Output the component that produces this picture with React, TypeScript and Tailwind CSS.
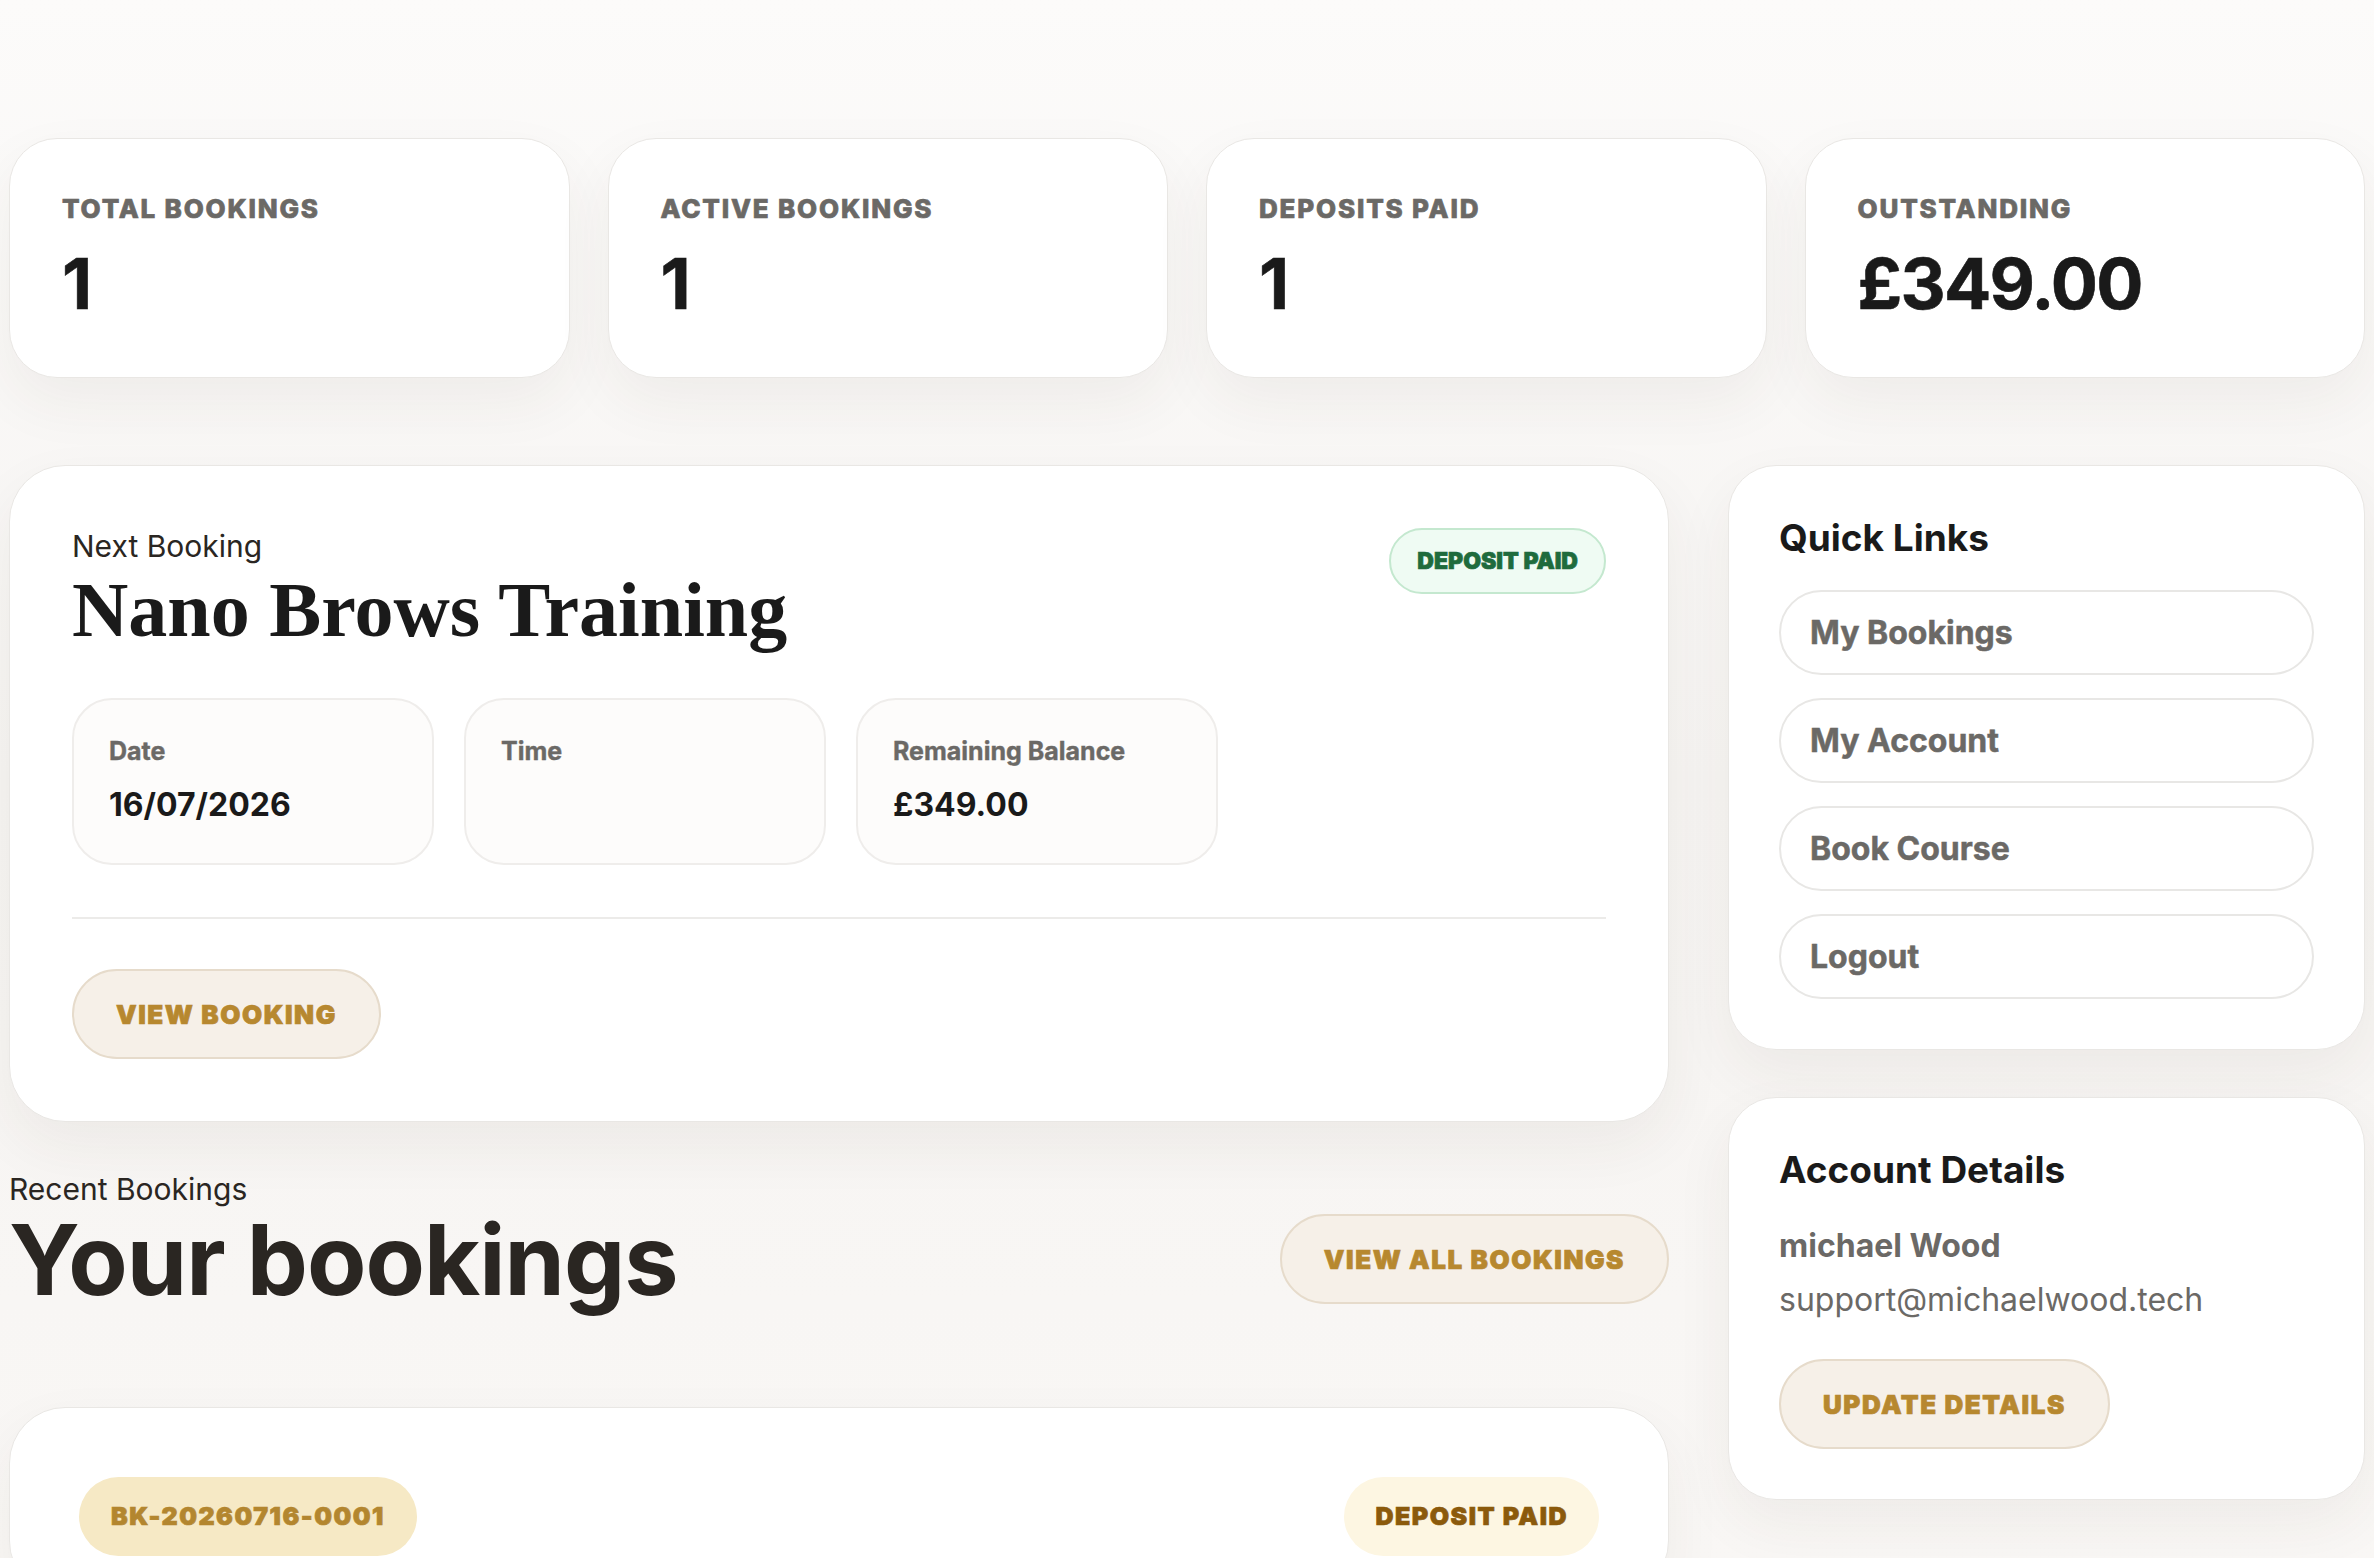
import React from 'react';

const stats = [
  { label: 'Total Bookings', value: '1' },
  { label: 'Active Bookings', value: '1' },
  { label: 'Deposits Paid', value: '1' },
  { label: 'Outstanding', value: '£349.00' },
];

const details = [
  { label: 'Date', value: '16/07/2026' },
  { label: 'Time', value: '' },
  { label: 'Remaining Balance', value: '£349.00' },
];

const quickLinks = ['My Bookings', 'My Account', 'Book Course', 'Logout'];

const font = { fontFamily: 'Inter, "Noto Sans", sans-serif' };

const cardClass =
  'bg-white border border-[#e9e7e4] shadow-[0_24px_60px_rgba(60,45,30,0.06)]';

// heavy caps text: Inter here stops at bold, so a thin stroke thickens it
const heavy = '[-webkit-text-stroke:0.7px_currentColor]';

const goldButton = `inline-flex items-center justify-center h-[90px] px-[42px] rounded-full border-2 border-[#e6dbcb] bg-[#f6f0e8] text-[#b7882f] text-[26px] font-black uppercase tracking-[0.06em] ${heavy}`;

export default function App() {
  return (
    <div
      className="h-[1558px] overflow-hidden bg-gradient-to-b from-[#fcfbfa] via-[#f6f4f2] to-[#f9f7f5] px-[9px] pt-[138px] text-[#1a1a1a]"
      style={font}
    >
      {/* stats */}
      <div className="grid grid-cols-4 gap-[38px]">
        {stats.map(s => (
          <div key={s.label} className={`${cardClass} h-[240px] rounded-[48px] pl-[52px] pt-[54px]`}>
            <div className={`text-[26px] leading-[31px] font-extrabold uppercase tracking-[0.07em] text-[#6b6966] ${heavy}`}>
              {s.label}
            </div>
            <div className="mt-[25px] text-[70px] leading-[70px] font-bold tracking-tight text-[#1a1a1a] [-webkit-text-stroke:0.6px_currentColor]">
              {s.value}
            </div>
          </div>
        ))}
      </div>

      <div className="mt-[87px] grid grid-cols-[1fr_637px] gap-[59px] items-start">
        {/* left column */}
        <div className="flex flex-col">
          <div className={`${cardClass} rounded-[56px] p-[62px]`}>
            <div className="flex items-start justify-between">
              <div>
                <div className="text-[30px] leading-[36px] text-[#2a2622]">Next Booking</div>
                <h2
                  className="mt-[3px] text-[78px] leading-[85px] font-bold text-[#1a1a1a]"
                  style={{ fontFamily: '"Liberation Serif", "DejaVu Serif", serif' }}
                >
                  Nano Brows Training
                </h2>
              </div>
              <span className={`inline-flex h-[66px] items-center rounded-full border-2 border-[#c4e8cf] bg-[#effbf3] px-[26px] text-[23px] font-black uppercase text-[#1f6b3d] ${heavy}`}>
                Deposit Paid
              </span>
            </div>

            <div className="mt-[46px] flex gap-[30px]">
              {details.map(d => (
                <div
                  key={d.label}
                  className="h-[167px] w-[362px] rounded-[40px] border-2 border-[#efedeb] bg-[#fdfcfb] px-[35px] pt-[36px]"
                >
                  <div className="text-[25px] leading-[31px] font-bold text-[#6b6966] [-webkit-text-stroke:0.4px_currentColor]">
                    {d.label}
                  </div>
                  <div className="mt-[17px] text-[32px] leading-[42px] font-bold text-[#1a1a1a]">
                    {d.value}
                  </div>
                </div>
              ))}
            </div>

            <div className="mt-[52px] border-t-2 border-[#ecebe9] pt-[50px]">
              <button className={goldButton}>View Booking</button>
            </div>
          </div>

          <div className="mt-[49px] flex items-end justify-between">
            <div>
              <div className="text-[30px] leading-[36px] text-[#2a2622]">Recent Bookings</div>
              <h2 className="mt-[2px] text-[97px] leading-[102px] font-bold tracking-[-0.01em] text-[#2a2622]">
                Your bookings
              </h2>
            </div>
            <button className={`${goldButton} mb-[7px]`}>View All Bookings</button>
          </div>

          <div className={`${cardClass} mt-[96px] rounded-[56px] px-[69px] pt-[69px] pb-[40px]`}>
            <div className="flex items-center justify-between">
              <span className={`inline-flex h-[79px] items-center rounded-full bg-[#f6e9c5] px-[32px] text-[25px] font-black tracking-[0.06em] text-[#b3862f] ${heavy}`}>
                BK-20260716-0001
              </span>
              <span className={`inline-flex h-[79px] items-center rounded-full bg-[#fdf6e2] px-[31px] text-[25px] font-black uppercase tracking-[0.06em] text-[#8b5a0c] ${heavy}`}>
                Deposit Paid
              </span>
            </div>
          </div>
        </div>

        {/* right column */}
        <div className="flex flex-col gap-[47px]">
          <div className={`${cardClass} rounded-[48px] p-[50px]`}>
            <h3 className="text-[37px] leading-[44px] font-bold text-[#1a1a1a]">Quick Links</h3>
            <div className="mt-[30px] flex flex-col gap-[23px]">
              {quickLinks.map(l => (
                <a
                  key={l}
                  className="flex h-[85px] items-center rounded-full border-2 border-[#e8e7e5] bg-white px-[29px] text-[32px] font-bold text-[#6b6966] [-webkit-text-stroke:0.5px_currentColor]"
                >
                  {l}
                </a>
              ))}
            </div>
          </div>

          <div className={`${cardClass} rounded-[48px] p-[50px]`}>
            <h3 className="text-[37px] leading-[44px] font-bold text-[#1a1a1a]">Account Details</h3>
            <div className="mt-[31px] text-[32px] leading-[45px] font-bold text-[#6b6966]">michael Wood</div>
            <div className="mt-[9px] text-[32px] leading-[45px] text-[#6b6966]">support@michaelwood.tech</div>
            <button className={`${goldButton} mt-[37px]`}>Update Details</button>
          </div>
        </div>
      </div>
    </div>
  );
}
